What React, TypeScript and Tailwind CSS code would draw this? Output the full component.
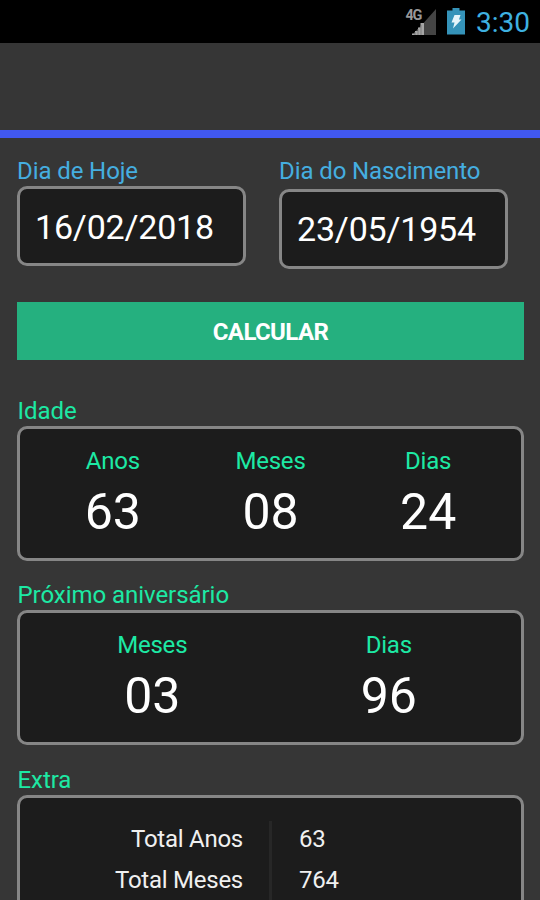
import type { ReactNode } from 'react';

type Field = {
  label: string;
  value: string;
};

const ageFields: Field[] = [
  { label: 'Anos', value: '63' },
  { label: 'Meses', value: '08' },
  { label: 'Dias', value: '24' },
];

const birthdayFields: Field[] = [
  { label: 'Meses', value: '03' },
  { label: 'Dias', value: '96' },
];

const extraRows: Field[] = [
  { label: 'Total Anos', value: '63' },
  { label: 'Total Meses', value: '764' },
];

function StatusBar() {
  return (
    <div className="flex h-[43px] shrink-0 items-center justify-end bg-black pr-[10px]">
      <svg aria-hidden="true" className="mr-[11px]" height="30" viewBox="0 0 32 30" width="32">
        <path d="M32 2V28H8L20 15.500Z" fill="#454545" />
        <path d="M8 28V26.500h3V24h3V20.500h2.500V16H20V28Z" fill="#a6a6a6" />
        <path d="M11 25v3M14 22v6M17 18v10" stroke="#6f6f6f" strokeWidth="0.7" />
        <text
          fill="#989898"
          fontFamily="Roboto, sans-serif"
          fontSize="14.500"
          fontWeight="700"
          paintOrder="stroke"
          stroke="#000"
          strokeWidth="1"
          textLength="17"
          x="1.500"
          y="13"
        >
          4G
        </text>
      </svg>
      <svg aria-hidden="true" className="mr-[11px]" height="28" viewBox="0 0 18 28" width="18">
        <path d="M5.500 0h7v2.500H18V26.500H0V2.500h5.500Z" fill="#3593b9" />
        <path d="M7.500 7h6l-1.500 4.500H14.500L6 20.500l1.500-6H4.500Z" fill="#e4f4fa" />
      </svg>
      <span className="pt-[2px] text-[28px] leading-[43px] text-[#3eb1e0]">3:30</span>
    </div>
  );
}

function DateField({ label, value, className = '' }: Field & { className?: string }) {
  return (
    <div className="w-[229px]">
      <div className="h-7 text-2xl leading-[27px] tracking-[-0.1px] whitespace-nowrap text-[#45aee0]">
        {label}
      </div>
      <div
        className={`flex h-20 items-center rounded-[10px] border-[3px] border-[#868686] bg-[#1c1c1c] px-[15px] pt-[2px] text-[34px] tracking-[-0.2px] text-white ${className}`}
      >
        {value}
      </div>
    </div>
  );
}

function Section({ title, children }: { title: string; children: ReactNode }) {
  return (
    <section className="h-[184.5px] shrink-0">
      <h2 className="pl-[0.5px] text-2xl leading-[29px] tracking-[-0.05px] text-[#1de9a4]">
        {title}
      </h2>
      <div className="h-[135px] rounded-[10px] border-[3px] border-[#868686] bg-[#1c1c1c]">
        {children}
      </div>
    </section>
  );
}

function Counters({ fields }: { fields: Field[] }) {
  return (
    <div className="flex px-[14px] pt-[18px] text-center">
      {fields.map((field) => (
        <div className="flex-1" key={field.label}>
          <div className="text-2xl leading-7 tracking-[-0.2px] text-[#1de9a4]">{field.label}</div>
          <div className="text-[50px] leading-[74px] text-white">{field.value}</div>
        </div>
      ))}
    </div>
  );
}

export default function App() {
  return (
    <main className="flex h-[900px] w-[540px] flex-col overflow-hidden bg-[#363636] font-[Roboto,sans-serif]">
      <StatusBar />
      <header className="h-[95px] shrink-0 border-b-8 border-[#4158f0]" />

      <div className="flex h-32 shrink-0 gap-[33px] px-[17px] pt-5">
        <DateField label="Dia de Hoje" value="16/02/2018" />
        <DateField className="mt-[2.5px]" label="Dia do Nascimento" value="23/05/1954" />
      </div>

      <button
        className="mt-[35.5px] mr-4 ml-[17px] h-[58px] shrink-0 bg-[#25b07f] pt-[2px] text-2xl font-bold tracking-[-0.6px] text-white"
        type="button"
      >
        CALCULAR
      </button>

      <div className="flex flex-col pt-[37px] pr-4 pl-[17px]">
        <Section title="Idade">
          <Counters fields={ageFields} />
        </Section>
        <Section title="Próximo aniversário">
          <Counters fields={birthdayFields} />
        </Section>
        <Section title="Extra">
          <div className="pt-[23px]">
            {extraRows.map((row) => (
              <div
                className="flex h-[41px] text-2xl leading-[36px] tracking-[-0.25px] text-[#f0f0f0]"
                key={row.label}
              >
                <div className="w-[252px] border-r-[3px] border-[#272727] pr-[26px] text-right">
                  {row.label}
                </div>
                <div className="pl-[27px]">{row.value}</div>
              </div>
            ))}
          </div>
        </Section>
      </div>
    </main>
  );
}
